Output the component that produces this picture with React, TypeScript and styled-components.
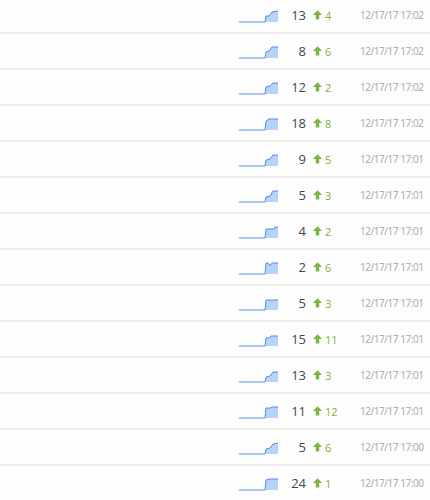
import styled, { createGlobalStyle } from "styled-components";

type Entry = {
  count: number;
  delta: number;
  time: string;
  spark: string;
};

const entries: Entry[] = [
  { count: 13, delta: 4, time: "12/17/17 17:02", spark: "27,7 30,7 33,3 39,2" },
  { count: 8, delta: 6, time: "12/17/17 17:02", spark: "27,7 30,6 33,2 39,2" },
  { count: 12, delta: 2, time: "12/17/17 17:02", spark: "27,6 31,5 34,2 39,2" },
  { count: 18, delta: 8, time: "12/17/17 17:02", spark: "27,4 30,2 39,2" },
  { count: 9, delta: 5, time: "12/17/17 17:01", spark: "27,7 31,6 34,2 39,2" },
  { count: 5, delta: 3, time: "12/17/17 17:01", spark: "27,8 31,7 34,2 39,2" },
  { count: 4, delta: 2, time: "12/17/17 17:01", spark: "27,4 35,4 36,2 39,2" },
  { count: 2, delta: 6, time: "12/17/17 17:01", spark: "27,2 29,2 31,5 33,2 39,2" },
  { count: 5, delta: 3, time: "12/17/17 17:01", spark: "27,3 39,3" },
  { count: 15, delta: 11, time: "12/17/17 17:01", spark: "27,5 30,5 32,3 39,3" },
  { count: 13, delta: 3, time: "12/17/17 17:01", spark: "27,8 31,7 34,3 39,3" },
  { count: 11, delta: 12, time: "12/17/17 17:01", spark: "27,3 32,3 33,2 39,2" },
  { count: 5, delta: 6, time: "12/17/17 17:00", spark: "27,8 31,7 34,3 39,2" },
  { count: 24, delta: 1, time: "12/17/17 17:00", spark: "27,3 30,2 39,2" },
];

const GlobalStyle = createGlobalStyle`
  html, body {
    margin: 0;
    padding: 0;
    background: #fdfdfd;
  }
  body {
    font-family: "Open Sans", "Liberation Sans", sans-serif;
    overflow: hidden;
  }
`;

const Sparkline = ({ points }: { points: string }) => {
  const line = `0,13 26,13 ${points}`;
  const area = `${line} 39,13`;
  return (
    <svg width={40} height={14} viewBox="0 0 40 14">
      <polygon points={area} fill="#b5d3fb" />
      <polyline
        points={line}
        fill="none"
        stroke="#5a8edb"
        strokeWidth={1}
        strokeLinejoin="round"
      />
    </svg>
  );
};

const UpArrow = () => (
  <svg width={9} height={10} viewBox="0 0 9 10">
    <path d="M4.5 0.3 L9 5 L6.2 5 L6.2 9.6 L2.8 9.6 L2.8 5 L0 5 Z" fill="#7cb342" />
  </svg>
);

const App = () => (
  <>
    <GlobalStyle />
    <List>
      {entries.map((entry, i) => (
        <Row key={i}>
          <Spark>
            <Sparkline points={entry.spark} />
          </Spark>
          <Count>{entry.count}</Count>
          <Delta>
            <UpArrow />
            {entry.delta}
          </Delta>
          <Time>{entry.time}</Time>
        </Row>
      ))}
    </List>
  </>
);

const List = styled.div`
  margin-top: -2px;
`;

const Row = styled.div`
  display: grid;
  grid-template-columns: 1fr 40px 27px 54px 63px;
  align-items: center;
  height: 34px;
  padding-right: 7px;
  border-bottom: 2px solid #efefef;
`;

const Spark = styled.div`
  grid-column: 2;
  display: flex;
  align-items: flex-end;
  padding-top: 2px;
`;

const Count = styled.div`
  text-align: right;
  font-size: 13px;
  color: #484848;
`;

const Delta = styled.div`
  display: flex;
  align-items: center;
  gap: 3px;
  padding-left: 7px;
  font-size: 11px;
  color: #7cb342;
`;

const Time = styled.div`
  font-size: 10px;
  letter-spacing: -0.45px;
  color: #a3a6ad;
  white-space: nowrap;
`;

export default App;
